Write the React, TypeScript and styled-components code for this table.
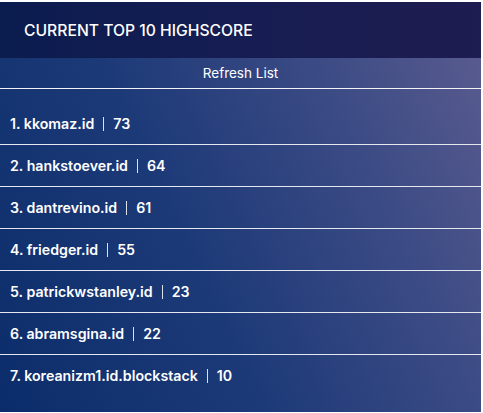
import React, { useState } from "react";
import styled, { createGlobalStyle } from "styled-components";

const GlobalStyle = createGlobalStyle`
  html, body {
    margin: 0;
    padding: 0;
    background: #ffffff;
  }
  body {
    font-family: Inter, "Noto Sans", "Liberation Sans", sans-serif;
    -webkit-font-smoothing: antialiased;
  }
`;

const Panel = styled.div`
  width: 481px;
  height: 410px;
  margin-top: 2px;
  display: flex;
  flex-direction: column;
  background: linear-gradient(
    65deg,
    #0b2c6a 0%,
    #1d3a78 40%,
    #3a4a84 70%,
    #5c5d90 100%
  );
  color: #ffffff;
  overflow: hidden;
`;

const Header = styled.div`
  height: 56px;
  display: flex;
  align-items: center;
  padding-left: 24px;
  background: linear-gradient(90deg, #0b1c4f 0%, #161d52 50%, #1e1c50 100%);
  font-size: 15.7px;
  font-weight: 500;
`;

const RefreshButton = styled.button`
  height: 31px;
  border: none;
  border-bottom: 1px solid #f2f2f7;
  background: transparent;
  color: #ffffff;
  font-family: inherit;
  font-size: 13.5px;
  cursor: pointer;
  padding: 0;
`;

const List = styled.ol`
  list-style: none;
  margin: 0;
  padding: 14px 0;
`;

const Row = styled.li<{ last?: boolean }>`
  height: 41px;
  display: flex;
  align-items: center;
  padding-left: 10px;
  font-size: 14.2px;
  font-weight: 600;
  border-bottom: ${(p) => (p.last ? "1px solid transparent" : "1px solid #e6e8f0")};
`;

const Divider = styled.span`
  display: inline-block;
  width: 1px;
  height: 14px;
  background: rgba(255, 255, 255, 0.85);
  margin: 0 9px;
`;

type scoreType = {
  name: string;
  score: number;
};

const App = () => {
  const [scores] = useState<scoreType[]>([
    { name: "kkomaz.id", score: 73 },
    { name: "hankstoever.id", score: 64 },
    { name: "dantrevino.id", score: 61 },
    { name: "friedger.id", score: 55 },
    { name: "patrickwstanley.id", score: 23 },
    { name: "abramsgina.id", score: 22 },
    { name: "koreanizm1.id.blockstack", score: 10 },
  ]);

  return (
    <>
      <GlobalStyle />
      <Panel>
        <Header>CURRENT TOP 10 HIGHSCORE</Header>
        <RefreshButton>Refresh List</RefreshButton>
        <List>
          {scores.map(({ name, score }, i) => (
            <Row key={name} last={i === scores.length - 1}>
              {i + 1}. {name}
              <Divider />
              {score}
            </Row>
          ))}
        </List>
      </Panel>
    </>
  );
};

export default App;
